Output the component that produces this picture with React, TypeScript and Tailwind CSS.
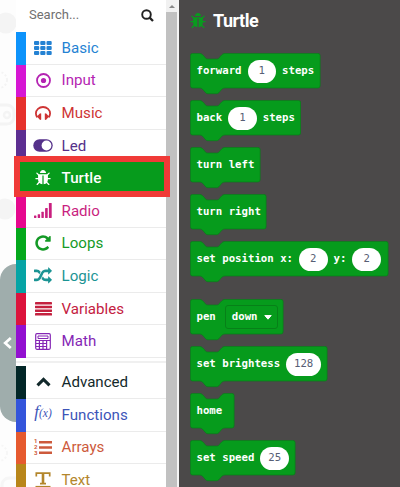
import React from "react";

type Svg = { className?: string };

const BUG =
  "M1632 896q0 26-19 45t-45 19h-224q0 171-67 290l208 209q19 19 19 45t-19 45q-18 19-45 19t-45-19l-198-197q-5 5-15 13t-42 28.5-65 36.5-82 29-97 13v-896h-128v896q-51 0-101.5-13.5t-87-33-66-39-43.5-32.5l-15-14-183 207q-20 21-48 21-24 0-43-16-19-18-20.5-44.5t15.5-46.5l202-227q-58-114-58-274h-224q-26 0-45-19t-19-45 19-45 45-19h224v-294l-173-173q-19-19-19-45t19-45 45-19 45 19l173 173h844l173-173q19-19 45-19t45 19 19 45-19 45l-173 173v294h224q26 0 45 19t19 45zm-480-576h-640q0-133 93.5-226.5t226.5-93.5 226.5 93.5 93.5 226.5z";

const Bug = ({ className }: Svg) => (
  <svg className={className} viewBox="0 0 1664 1664" fill="currentColor"><path d={BUG} /></svg>
);

const Grid = () => (
  <svg className="h-[14px] w-[18px]" viewBox="0 0 18 14" fill="currentColor">
    {[0, 5, 10].map((y) => [0, 6.25, 12.5].map((x) => (
      <rect key={`${x}-${y}`} x={x} y={y} width="5.2" height="4" rx="1.1" />
    )))}
  </svg>
);

const Target = () => (
  <svg className="size-[15px]" viewBox="0 0 15 15">
    <circle cx="7.5" cy="7.5" r="6.5" fill="none" stroke="currentColor" strokeWidth="1.8" />
    <circle cx="7.5" cy="7.5" r="2.6" fill="currentColor" />
  </svg>
);

const Headphones = () => (
  <svg className="h-[14px] w-[16px]" viewBox="0 0 16 14">
    <path d="M2.4 11.3C1.3 10 .9 9 .9 7.6C.9 3.8 4.1 1 8 1s7.1 2.8 7.1 6.6c0 1.4-.4 2.4-1.5 3.7" fill="none" stroke="currentColor" strokeWidth="1.8" />
    <path d="M2 10.5L4.800 7.600q.3-.4.8-.2l.6.2v6l-.9.300q-.5 0-.7-.4zM14 10.500L11.200 7.600q-.3-.4-.8-.2l-.6.200v6l.9.300q.5 0 .7-.4z" fill="currentColor" />
  </svg>
);

const Toggle = () => (
  <svg className="h-[13px] w-[20px]" viewBox="0 0 20 13">
    <rect x=".3" y=".3" width="19.4" height="12.4" rx="6.2" fill="currentColor" />
    <circle cx="13.5" cy="6.5" r="4.9" fill="white" />
  </svg>
);

const Signal = () => (
  <svg className="h-[15px] w-[18px]" viewBox="0 0 18 15" fill="currentColor">
    <rect x="0" y="12.5" width="2.4" height="2.5" rx=".4" />
    <rect x="3.7" y="11.2" width="2.4" height="3.8" rx=".4" />
    <rect x="7.4" y="8.8" width="2.4" height="6.2" rx=".4" />
    <rect x="11.1" y="5" width="2.6" height="10" rx=".4" />
    <rect x="14.9" y="0" width="2.8" height="15" rx=".4" />
  </svg>
);

const Redo = () => (
  <svg className="size-[18px]" viewBox="0 0 1792 1792" fill="currentColor">
    <path d="M1664 256v448q0 26-19 45t-45 19h-448q-42 0-59-40-17-39 14-69l138-138q-148-137-349-137-104 0-198.500 40.500t-163.500 109.500-109.500 163.500-40.500 198.500 40.500 198.500 109.500 163.500 163.500 109.500 198.500 40.500q119 0 225-52t179-147q7-10 23-12 15 0 25 9l137 138q9 8 9.500 20.500t-7.500 22.500q-109 132-264 204.500t-327 72.500q-156 0-298-61t-245-164-164-245-61-298 61-298 164-245 245-164 298-61q147 0 284.500 55.500t244.500 156.500l130-129q29-31 70-14 39 17 39 59z" />
  </svg>
);

const Shuffle = () => (
  <svg className="size-[18px]" viewBox="0 0 1792 1792" fill="currentColor">
    <path d="M666 481q-60 92-137 273-22-45-37-72.500t-40.500-63.500-51-56.500-63-35-81.500-14.500h-224q-14 0-23-9t-9-23v-192q0-14 9-23t23-9h224q250 0 410 225zm1126 799q0 14-9 23l-320 320q-9 9-23 9-13 0-22.500-9.500t-9.500-22.500v-192q-32 0-85 .5t-81 1-73-1-71-5-64-10.500-63-18.500-58-28.500-59-40-55-53.500-56-69.500q59-93 136-273 22 45 37 72.500t40.500 63.500 51 56.500 63 35 81.500 14.500h256v-192q0-14 9-23t23-9q12 0 24 10l319 319q9 9 9 23zm0-896q0 14-9 23l-320 320q-9 9-23 9-13 0-22.500-9.500t-9.500-22.500v-192h-256q-48 0-87 15t-69 45-51 61.500-45 77.500q-32 62-78 171-29 66-49.500 111t-54 105-64 100-74 83-90 68.500-106.500 42-128 16.500h-224q-14 0-23-9t-9-23v-192q0-14 9-23t23-9h224q48 0 87-15t69-45 51-61.500 45-77.500q32-62 78-171 29-66 49.500-111t54-105 64-100 74-83 90-68.500 106.500-42 128-16.500h256v-192q0-14 9-23t23-9q12 0 24 10l319 319q9 9 9 23z" />
  </svg>
);

const Lines = () => (
  <svg className="h-[14px] w-[17px]" viewBox="0 0 17 14" fill="currentColor">
    {[0, 3.7, 7.4, 11.1].map((y) => <rect key={y} y={y} width="17" height="2.5" rx=".4" />)}
  </svg>
);

const Calculator = () => (
  <svg className="h-[17px] w-[16px]" viewBox="0 0 16 17" fill="none" stroke="currentColor">
    <rect x=".7" y=".7" width="14.6" height="15.6" rx="1.2" strokeWidth="1.2" />
    <path d="M3 3h10v2.500H3z" strokeWidth="1" />
    <path d="M1 7.500h14M1 10.500h10.500M1 13.500h10.500M4.400 7.500V16M8 7.500V16M11.600 7.500V16" strokeWidth="1.2" />
  </svg>
);

const Caret = () => (
  <svg className="h-[10px] w-[15px]" viewBox="0 0 15 10">
    <path d="M1.500 8.300L7.500 2.400L13.500 8.300" fill="none" stroke="currentColor" strokeWidth="3.1" />
  </svg>
);

const Fx = () => (
  <span className="-mt-[7px] whitespace-nowrap font-['Liberation_Serif',serif] text-[17px] leading-none italic">
    f<span className="text-[11.5px]">(x)</span>
  </span>
);

const Numbered = () => (
  <span className="flex items-center gap-[1px]">
    <span className="flex w-[4px] flex-col font-['Roboto',sans-serif] text-[6px] leading-[6px] font-bold">
      <span>1</span><span>2</span><span>3</span>
    </span>
    <svg className="h-[13px] w-[13px]" viewBox="0 0 13 13" fill="currentColor">
      <path d="M0 0h13v2.500H0zM0 5.200h13v2.500H0zM0 10.400h13v2.500H0z" />
    </svg>
  </span>
);

const TextIcon = () => (
  <svg className="h-[16px] w-[16px]" viewBox="0 0 16 16" fill="none" stroke="currentColor">
    <path d="M1.300 4.500V1.200h13.400v3.300M8 1.200v10.500M5 11.600h6" strokeWidth="1.7" />
    <path d="M8 1v10.500" strokeWidth="2.6" />
    <path d="M.5 14.700h15" strokeWidth="1.6" />
  </svg>
);

type Item = { name: string; bar: string; text: string; icon: React.ReactNode };

const MAIN: Item[] = [
  { name: "Basic", bar: "bg-[#0d93fb]", text: "text-[#2482d3]", icon: <Grid /> },
  { name: "Input", bar: "bg-[#d616d3]", text: "text-[#b424b2]", icon: <Target /> },
  { name: "Music", bar: "bg-[#e6312c]", text: "text-[#ce3434]", icon: <Headphones /> },
  { name: "Led", bar: "bg-[#5c2e91]", text: "text-[#55318a]", icon: <Toggle /> },
  { name: "Turtle", bar: "bg-[#069b1c]", text: "bg-[#069b1c] font-medium text-white", icon: <Bug className="size-[16px]" /> },
  { name: "Radio", bar: "bg-[#e6088e]", text: "text-[#c91f7f]", icon: <Signal /> },
  { name: "Loops", bar: "bg-[#04a81c]", text: "text-[#159a27]", icon: <Redo /> },
  { name: "Logic", bar: "bg-[#06a4a5]", text: "text-[#1b9494]", icon: <Shuffle /> },
  { name: "Variables", bar: "bg-[#dc143c]", text: "text-[#c4213f]", icon: <Lines /> },
  { name: "Math", bar: "bg-[#9210d0]", text: "text-[#8527b5]", icon: <Calculator /> },
];

const MORE: Item[] = [
  { name: "Advanced", bar: "bg-[#022627]", text: "text-[#12292b]", icon: <Caret /> },
  { name: "Functions", bar: "bg-[#3455db]", text: "text-[#3c54b8]", icon: <Fx /> },
  { name: "Arrays", bar: "bg-[#e65a2f]", text: "text-[#cd5a3c]", icon: <Numbered /> },
  { name: "Text", bar: "bg-[#b8861a]", text: "text-[#b3862c]", icon: <TextIcon /> },
];

const Row = ({ item }: { item: Item }) => (
  <div className="flex h-[32.6px] shrink-0">
    <div className={`w-[10px] shrink-0 ${item.bar}`} />
    <div className={`flex flex-1 items-center border-b border-[#ebebeb] ${item.text}`}>
      <span className="ml-[6px] flex w-[22px] shrink-0 items-center justify-center">{item.icon}</span>
      <span className="ml-[7.6px] text-[15.1px] leading-[12px]">{item.name}</span>
    </div>
  </div>
);

const Block = ({ width, children, gap = "mt-[12px]" }: { width: number; children: React.ReactNode; gap?: string }) => (
  <div className={`relative flex h-[35px] shrink-0 items-center pl-[6.5px] ${gap}`} style={{ width }}>
    <svg className="absolute top-0 left-0 h-[42px] w-full" fill="#069b1c" stroke="#078018" strokeWidth=".7">
      <path
        d={`M2.500 .4H9.500C11.500 .4 12.500 1.500 13.500 2.600L15 4.400C16 5.500 16.500 6 18 6H26.500C28 6 28.500 5.500 29.500 4.400L31 2.600C32 1.500 33 .4 35 .4H${width - 2.5}Q${width - 0.4} .4 ${width - 0.4} 2.500V32.800Q${width - 0.4} 35 ${width - 2.5} 35H35C33 35 32 36 31 37.200L29.500 39C28.500 40.200 28 40.700 26.500 40.700H18C16.500 40.700 16 40.200 15 39L13.500 37.200C12.500 36 11.500 35 9.500 35H2.500Q.4 35 .4 32.800V2.500Q.4 .4 2.500 .4Z`}
      />
    </svg>
    <div className="relative flex items-center pt-[1px] leading-[16px] whitespace-pre text-white">{children}</div>
  </div>
);

const Num = ({ children, wide = false }: { children: string; wide?: boolean }) => (
  <span className={`mx-[6px] flex h-[23px] items-center justify-center rounded-full bg-white font-normal text-[#575e75] ${wide ? "w-[35px]" : "w-[28.5px]"}`}>
    {children}
  </span>
);

export default function App() {
  return (
    <div className="relative flex h-[487px] w-[400px] overflow-hidden bg-white font-['Roboto',sans-serif]">
      <div className="flex w-[16px] shrink-0 flex-col bg-[#fdfdfd]">
        <svg className="h-[264px] w-[16px]" fill="none" stroke="#f4f4f4">
          <circle cx="6" cy="23" r="10.5" fill="#f4f4f4" stroke="none" />
          <circle cx="-1" cy="80" r="8" strokeWidth="2" strokeDasharray="2 2" />
          <rect x="-8" y="105" width="22" height="19" rx="7" strokeWidth="3" />
          <circle cx="7" cy="115" r="3" strokeWidth="2.5" />
          <circle cx="5" cy="209" r="10.5" fill="#f4f4f4" stroke="none" />
        </svg>
        <div className="flex h-[158px] items-center justify-start rounded-l-[17px] bg-[#9fadac] pl-[2px]">
          <svg className="-mt-[1px] h-[14px] w-[11px]" viewBox="0 0 11 14"><path d="M8.800 2L3.200 7L8.800 12" fill="none" stroke="white" strokeWidth="2.7" /></svg>
        </div>
        <svg className="h-[65px] w-[16px]" fill="none" stroke="#f6f6f6">
          <circle cx="-1" cy="31" r="8" strokeWidth="2" strokeDasharray="2 2" />
          <rect x="2" y="56" width="24" height="22" rx="7" strokeWidth="3" />
        </svg>
      </div>

      <div className="flex w-[150px] shrink-0 flex-col">
        <div className="flex h-[32px] shrink-0 items-center justify-between pr-[12px] pl-[13px] text-[13px] text-[#707070]">
          <span className="-mt-[2px]">Search...</span>
          <svg className="-mt-[2px] size-[13px]" viewBox="0 0 13 13" fill="none" stroke="#222" strokeWidth="1.9">
            <circle cx="5.5" cy="5.5" r="4.3" /><path d="M8.600 8.600L12 12" strokeWidth="2.3" />
          </svg>
        </div>
        {MAIN.map((item) => <Row key={item.name} item={item} />)}
        <div className="mb-[3px] h-[5.5px] shrink-0 border-b-[2px] border-[#f0f0f0]" />
        {MORE.map((item) => <Row key={item.name} item={item} />)}
      </div>

      <div className="flex w-[11px] shrink-0 flex-col bg-[#c1c1c1]">
        <div className="flex h-[12px] items-center justify-center bg-[#f1f1f1]">
          <svg className="h-[3px] w-[6px]" viewBox="0 0 6 3"><path d="M0 3L3 0L6 3Z" fill="#888" /></svg>
        </div>
      </div>
      <div className="w-[1.5px] shrink-0 bg-[#f4f4f4]" />

      <div className="flex flex-1 flex-col bg-[#4b4949] pl-[11.5px]">
        <div className="flex h-[41px] shrink-0 items-center text-[#089b1e]">
          <Bug className="size-[16px]" />
          <span className="ml-[7px] text-[18px] font-bold tracking-[-0.5px] text-white">Turtle</span>
        </div>
        <div className="flex flex-col font-['DejaVu_Sans_Mono',monospace] text-[10.7px] font-bold">
          <Block width={130.5}>forward<Num>1</Num>steps</Block>
          <Block width={111}>back<Num>1</Num>steps</Block>
          <Block width={70.5}>turn left</Block>
          <Block width={76.5}>turn right</Block>
          <Block width={198.5}>set position x:<Num>2</Num>y:<Num>2</Num></Block>
          <Block width={93.5} gap="mt-[23px]">
            pen
            <span className="ml-[9px] flex h-[24px] w-[53px] items-center rounded-[3px] border border-[#078018] pl-[6px]">
              down
              <svg className="ml-[6px] h-[5px] w-[8px]" viewBox="0 0 8 5"><path d="M.8 .5H7.200L4 4.200Z" fill="white" stroke="white" strokeLinejoin="round" /></svg>
            </span>
          </Block>
          <Block width={137.5}>set brightess<Num wide>128</Num></Block>
          <Block width={44.5}>home</Block>
          <Block width={105.5}>set speed<Num>25</Num></Block>
        </div>
      </div>

      <div className="absolute top-[156px] left-[14px] h-[41px] w-[156px] border-[6px] border-[#f03a37]" />
    </div>
  );
}
